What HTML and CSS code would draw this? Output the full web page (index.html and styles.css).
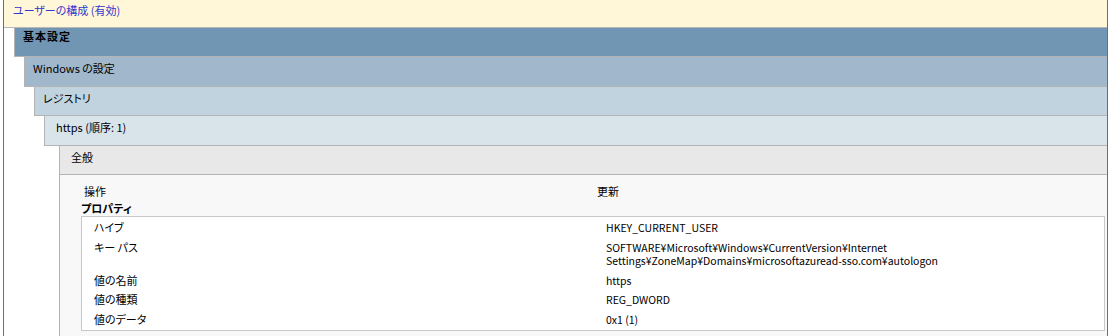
FILE: index.html
```html
<!DOCTYPE html>
<html lang="ja">
<head>
    <meta charset="UTF-8">
    <meta name="viewport" content="width=device-width, initial-scale=1.0">
    <title>ユーザーの構成</title>
    <link rel="stylesheet" href="styles.css">
</head>
<body>
    <div class="report">
        <div class="scope">ユーザーの構成 (有効)</div>

        <div class="band band-1">基本設定</div>
        <div class="band band-2">Windows の設定</div>
        <div class="band band-3">レジストリ</div>
        <div class="band band-4">https (順序: 1)</div>

        <div class="section">
            <div class="band band-5">全般</div>
            <div class="section-body">
                <table class="info">
                    <tr>
                        <td class="col-label">操作</td>
                        <td>更新</td>
                    </tr>
                </table>

                <div class="subhead">プロパティ</div>

                <div class="props-box">
                    <table class="props">
                        <tr>
                            <td class="col-label">ハイブ</td>
                            <td class="col-value">HKEY_CURRENT_USER</td>
                        </tr>
                        <tr>
                            <td class="col-label">キー パス</td>
                            <td class="col-value">SOFTWARE¥Microsoft¥Windows¥CurrentVersion¥Internet Settings¥ZoneMap¥Domains¥microsoftazuread-sso.com¥autologon</td>
                        </tr>
                        <tr>
                            <td class="col-label">値の名前</td>
                            <td class="col-value">https</td>
                        </tr>
                        <tr>
                            <td class="col-label">値の種類</td>
                            <td class="col-value">REG_DWORD</td>
                        </tr>
                        <tr>
                            <td class="col-label">値のデータ</td>
                            <td class="col-value">0x1 (1)</td>
                        </tr>
                    </table>
                </div>
            </div>
        </div>
    </div>
</body>
</html>
```

FILE: styles.css
```css
* {
    box-sizing: border-box;
}

body {
    margin: 0;
    background-color: #fff;
    font-family: "Noto Sans CJK JP", "Noto Sans", sans-serif;
    font-size: 11px;
    font-feature-settings: "palt";
    color: #000;
}

.report {
    margin: 0 2px 0 3px;
    border-left: 1px solid #6e6e6e;
    border-right: 1px solid #6e6e6e;
    min-height: 336px;
}

.scope {
    height: 28px;
    padding: 3px 0 0 9px;
    line-height: 15px;
    background-color: #fff7d7;
    border-bottom: 1px solid #b8b8b8;
    color: #3535cf;
}

.band {
    height: 29px;
    padding: 4px 0 0 8px;
    line-height: 15px;
    border-left: 1px solid #b4b4b4;
    border-bottom: 1px solid #b4b4b4;
}

.band-1 {
    margin-left: 10px;
    padding-top: 1px;
    background-color: #7096b4;
    font-weight: bold;
    letter-spacing: 1px;
}

.band-2 {
    height: 30px;
    margin-left: 20px;
    background-color: #a1b7cb;
}

.band-3 {
    margin-left: 30px;
    background-color: #c1d3de;
}

.band-4 {
    height: 30px;
    margin-left: 40px;
    padding-left: 11px;
    background-color: #d9e3ea;
}

.section {
    margin-left: 55px;
}

.band-5 {
    padding-left: 11px;
    background-color: #e8e8e8;
}

.section-body {
    padding: 9px 2px 10px 21px;
    background-color: #f8f8f8;
    border-left: 1px solid #b4b4b4;
}

table {
    width: 100%;
    border-collapse: collapse;
    table-layout: fixed;
}

td {
    vertical-align: top;
}

.info td {
    padding: 0 4px 2px 3px;
    line-height: 15px;
}

.info .col-label {
    width: 513px;
}

.subhead {
    line-height: 15px;
    font-weight: bold;
}

.props-box {
    padding: 1px 0;
    background-color: #fff;
    border: 1px solid #c8c8c8;
}

.props td {
    padding: 3px 12px;
    line-height: 13.5px;
}

.props .col-label {
    width: 512px;
}

.props .col-value {
    font-size: 10.5px;
}
```
